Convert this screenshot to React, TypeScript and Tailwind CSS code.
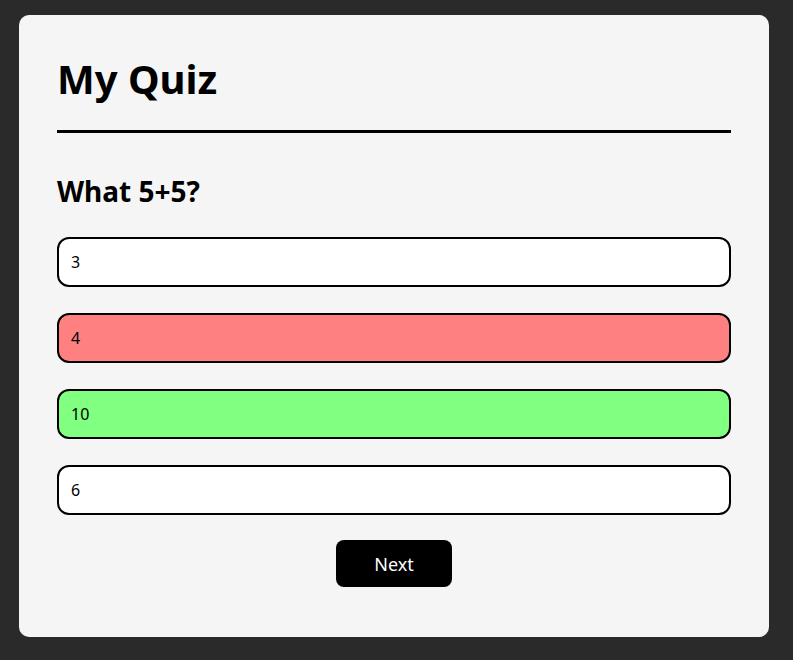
import React, { useState } from "react";

interface Option {
  label: string;
  state: "idle" | "wrong" | "right";
}

const options: Option[] = [
  { label: "3", state: "idle" },
  { label: "4", state: "wrong" },
  { label: "10", state: "right" },
  { label: "6", state: "idle" },
];

const stateClass: Record<Option["state"], string> = {
  idle: "bg-white",
  wrong: "bg-[#ff8080]",
  right: "bg-[#80ff80]",
};

const App: React.FC = () => {
  const [current] = useState(0);

  return (
    <div
      className="min-h-[660px] w-full bg-[#2a2a2a] pt-[15px] pl-[19px]"
      style={{ fontFamily: '"Noto Sans", "Open Sans", sans-serif' }}
    >
      <div className="w-[750px] rounded-[10px] bg-[#f5f5f5] px-[38px] pt-[38px] pb-[50px]">
        {/* Header */}
        <h1 className="text-[40px] leading-[52px] font-bold text-black">My Quiz</h1>
        <div className="mt-[25px] h-[3px] w-full bg-black"></div>

        {/* Question */}
        <h2 className="mt-[40px] text-[28px] leading-[36px] font-bold text-black">
          What 5+5?
        </h2>

        <ul className="mt-[28px] flex flex-col gap-[26px]" key={current}>
          {options.map((opt) => (
            <li
              key={opt.label}
              className={`flex h-[50px] items-center rounded-[12px] border-2 border-black pl-[12px] text-[16px] text-black ${stateClass[opt.state]}`}
            >
              {opt.label}
            </li>
          ))}
        </ul>

        <div className="mt-[25px] flex justify-center">
          <button className="h-[47px] w-[116px] rounded-[8px] bg-black pt-[2px] text-[18px] text-white">
            Next
          </button>
        </div>
      </div>
    </div>
  );
};

export default App;
